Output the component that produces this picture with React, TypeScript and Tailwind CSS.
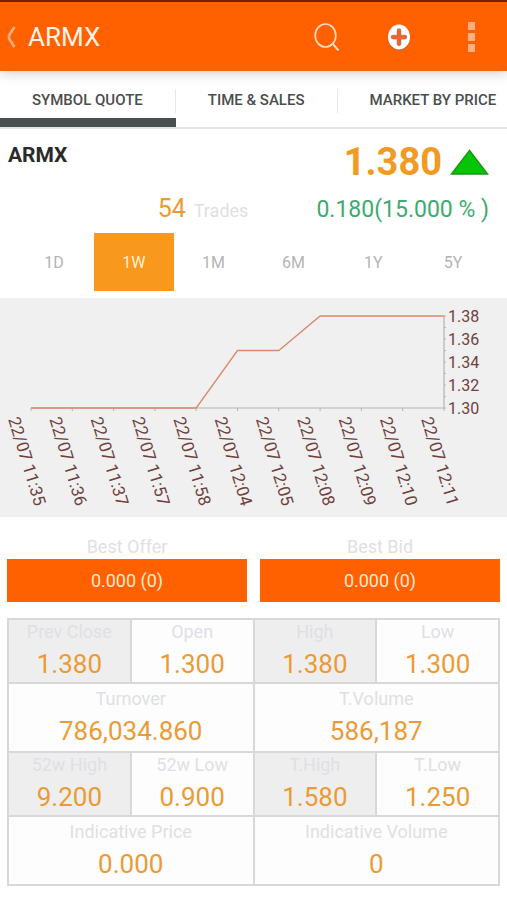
import { useState } from "react";
import clsx from "clsx";

const TABS = ["SYMBOL QUOTE", "TIME & SALES", "MARKET BY PRICE"];
const PERIODS = ["1D", "1W", "1M", "6M", "1Y", "5Y"];

const PRICE_TICKS = ["1.38", "1.36", "1.34", "1.32", "1.30"];

const POINTS = [
  { time: "22/07 11:35", price: 1.3 },
  { time: "22/07 11:36", price: 1.3 },
  { time: "22/07 11:37", price: 1.3 },
  { time: "22/07 11:57", price: 1.3 },
  { time: "22/07 11:58", price: 1.3 },
  { time: "22/07 12:04", price: 1.35 },
  { time: "22/07 12:05", price: 1.35 },
  { time: "22/07 12:08", price: 1.38 },
  { time: "22/07 12:09", price: 1.38 },
  { time: "22/07 12:10", price: 1.38 },
  { time: "22/07 12:11", price: 1.38 },
];

type Stat = { label: string; value: string };

const STATS: Stat[][] = [
  [
    { label: "Prev Close", value: "1.380" },
    { label: "Open", value: "1.300" },
    { label: "High", value: "1.380" },
    { label: "Low", value: "1.300" },
  ],
  [
    { label: "Turnover", value: "786,034.860" },
    { label: "T.Volume", value: "586,187" },
  ],
  [
    { label: "52w High", value: "9.200" },
    { label: "52w Low", value: "0.900" },
    { label: "T.High", value: "1.580" },
    { label: "T.Low", value: "1.250" },
  ],
  [
    { label: "Indicative Price", value: "0.000" },
    { label: "Indicative Volume", value: "0" },
  ],
];

function Header() {
  return (
    <header className="relative z-10 flex h-[71px] items-center border-t-2 border-[#7a1c00] bg-[#ff6000] shadow-[0_2px_12px_rgba(0,0,0,0.2)]">
      <button type="button" aria-label="Back" className="flex h-full w-7 items-center pl-[6px]">
        <svg width="10" height="22" viewBox="0 0 10 22" fill="none">
          <path d="M8.500 1 3 9.500v3L8.500 21" stroke="#ffae7c" strokeWidth="2.600" />
        </svg>
      </button>
      <h1 className="flex-1 text-[26px] leading-8 text-[#fff3e6]">ARMX</h1>

      <button type="button" aria-label="Search" className="flex h-full w-[72px] items-center justify-center">
        <svg width="26" height="28" viewBox="0 0 26 28" fill="none" stroke="#ffdcc0" strokeWidth="1.700">
          <ellipse cx="11.500" cy="12.500" rx="10.300" ry="11.500" />
          <path d="m18.500 20.500 6 7" strokeWidth="2" />
        </svg>
      </button>
      <button type="button" aria-label="Add to watchlist" className="flex h-full w-[72px] items-center justify-center">
        <svg width="24" height="28" viewBox="0 0 24 28">
          <ellipse cx="12" cy="15" rx="11" ry="12.500" fill="#b0683f" />
          <ellipse cx="12" cy="14" rx="11" ry="12.500" fill="#fff" />
          <path d="M12 7.500v13M6 14h12" stroke="#a8867a" strokeWidth="4.600" strokeLinecap="round" />
          <path d="M12 8.500v12.500M6.500 14.500h11" stroke="#f2622a" strokeWidth="3.600" strokeLinecap="round" />
        </svg>
      </button>
      <button type="button" aria-label="More" className="flex h-full w-[72px] items-center justify-center">
        <svg width="7" height="30" viewBox="0 0 7 30" fill="#ffb080">
          <rect width="7" height="8" />
          <rect y="11" width="7" height="8" />
          <rect y="22" width="7" height="8" />
        </svg>
      </button>
    </header>
  );
}

function PriceChart() {
  const left = 31;
  const right = 444;
  const top = 18;
  const bottom = 110;
  const step = (right - left) / (POINTS.length - 1);

  const getX = (index: number) => left + index * step;
  const getY = (price: number) => bottom - ((price - 1.3) / 0.08) * (bottom - top);

  const line = POINTS.map((point, index) => `${getX(index)},${getY(point.price)}`).join(" ");

  return (
    <svg viewBox="0 0 507 219" className="block h-auto w-full bg-[#f0f0f0]" role="img" aria-label="Price chart">
      <path d={`M${left} ${bottom}H${right}V${top}`} fill="none" stroke="#b4b4b4" strokeWidth="1.200" />

      {POINTS.map((point, index) => (
        <path key={point.time} d={`M${getX(index)} ${bottom}v3`} stroke="#b4b4b4" />
      ))}
      {Array.from({ length: 9 }, (_, index) => (
        <path key={index} d={`M${right} ${top + index * 11.5}h2`} stroke="#b4b4b4" />
      ))}

      <polyline points={line} fill="none" stroke="#d88a6e" strokeWidth="1.300" />

      {PRICE_TICKS.map((tick, index) => (
        <text key={tick} x="448" y={top + 6 + index * 23} fontSize="16" fill="#6f423d">
          {tick}
        </text>
      ))}
      {POINTS.map((point, index) => (
        <text
          key={point.time}
          transform={`translate(${getX(index) - 23} 121) rotate(73)`}
          fontSize="17"
          fill="#6f423d"
        >
          {point.time}
        </text>
      ))}
    </svg>
  );
}

function BestPrice({ id, label, value }: Stat & { id: string }) {
  return (
    <div>
      <p id={id} className="text-center text-[18px] leading-6 text-[#dfe0e5]">
        {label}
      </p>
      <button
        type="button"
        aria-describedby={id}
        className="h-[43px] w-full bg-[#ff6000] text-[18px] text-[#ffe9d2]"
      >
        {value}
      </button>
    </div>
  );
}

export default function App() {
  const [activeTab, setActiveTab] = useState("SYMBOL QUOTE");
  const [period, setPeriod] = useState("1W");

  return (
    <div className="min-h-screen bg-white pb-4 font-[Roboto,sans-serif]">
      <Header />

      <nav className="flex overflow-x-auto overflow-y-hidden border-b-2 border-[#e4e6e6] [scrollbar-width:none]">
        {TABS.map((tab) => (
          <button
            key={tab}
            type="button"
            onClick={() => setActiveTab(tab)}
            className={clsx(
              "group h-[56px] shrink-0 whitespace-nowrap border-b-[9px] pt-3",
              activeTab === tab ? "border-[#4a4e4e]" : "border-transparent"
            )}
          >
            <span className="flex h-6 items-center border-r border-[#e8e8e8] px-8 text-[15px] font-medium text-[#4a4e4e] group-last:border-r-0 group-last:pr-2">
              {tab}
            </span>
          </button>
        ))}
      </nav>

      <main>
        <section className="pl-2 pr-[18px]">
          <div className="flex h-[66px] justify-between">
            <h2 className="pt-3 text-[21px] font-bold leading-7 text-[#2a2a2a]">ARMX</h2>
            <div className="flex items-center gap-2">
              <span className="text-[38px] font-bold text-[#f39a22]">1.380</span>
              <svg width="39" height="27" viewBox="0 0 39 27">
                <path d="M19.500 1.500 37.500 25H1.500Z" fill="#06c406" stroke="#159a12" strokeWidth="1.500" />
              </svg>
            </div>
          </div>

          <div className="flex h-7 items-baseline justify-between">
            <div className="flex flex-1 items-baseline justify-end gap-2 pr-[68px]">
              <span className="text-[25px] leading-7 text-[#eb9b35]">54</span>
              <span className="text-[18px] text-[#dfe0e5]">Trades</span>
            </div>
            <span className="text-[23px] leading-7 text-[#3cab70]">0.180(15.000 % )</span>
          </div>
        </section>

        <div className="grid grid-cols-6 px-[14px] pb-[7px] pt-[10px]">
          {PERIODS.map((item) => (
            <button
              key={item}
              type="button"
              onClick={() => setPeriod(item)}
              className={clsx(
                "h-[58px] pt-[2px] text-[16px]",
                period === item ? "bg-[#f8981d] text-[#fff0d8]" : "text-[#b4b4b4]"
              )}
            >
              {item}
            </button>
          ))}
        </div>

        <PriceChart />

        <section className="grid grid-cols-2 gap-[13px] px-[7px] pb-4 pt-[18px]">
          <BestPrice id="best-offer" label="Best Offer" value="0.000 (0)" />
          <BestPrice id="best-bid" label="Best Bid" value="0.000 (0)" />
        </section>

        <div className="px-[7px]">
          <table className="w-full table-fixed border-collapse border-2 border-[#d8d8d8] text-center">
            <tbody>
              {STATS.map((row, rowIndex) => (
                <tr key={rowIndex} className={row.length === 4 ? "h-[64px]" : "h-[69px]"}>
                  {row.map((stat, index) => (
                    <td
                      key={stat.label}
                      colSpan={4 / row.length}
                      className={clsx(
                        "border-2 border-[#d8d8d8] p-0",
                        row.length === 4 && index % 2 === 0 ? "bg-[#eeeeee]" : "bg-[#fdfdfd]"
                      )}
                    >
                      <div className="text-[18px] leading-6 text-[#dfe0e5]">{stat.label}</div>
                      <div className="pt-[2px] text-[26px] leading-9 text-[#eb9b35]">{stat.value}</div>
                    </td>
                  ))}
                </tr>
              ))}
            </tbody>
          </table>
        </div>
      </main>
    </div>
  );
}
